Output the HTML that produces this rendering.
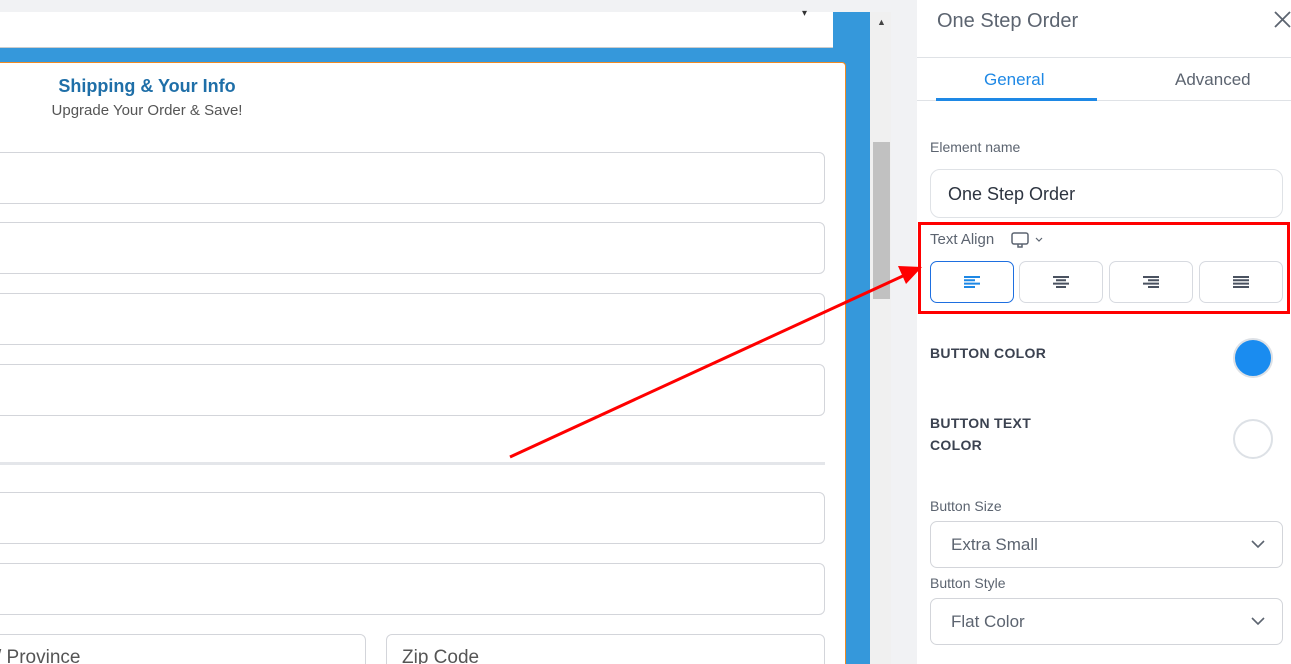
<!DOCTYPE html>
<html style="width:1291px;height:664px;overflow:hidden"><head><style>
body{margin:0;width:1291px;height:664px;overflow:hidden;position:relative;background:#f1f2f4;font-family:"Liberation Sans",sans-serif}
.a{position:absolute;box-sizing:border-box}
.inp{position:absolute;box-sizing:border-box;border:1px solid #d3d5da;border-radius:6px;background:#fff}
.btn{position:absolute;box-sizing:border-box;border:1px solid #d7dae0;border-radius:7px;background:#fff;top:261px;height:42px;width:84px;display:flex;align-items:center;justify-content:center}
.lbl{position:absolute;color:#5c6470;font-size:14px}
.bold{position:absolute;color:#3b4250;font-size:14px;font-weight:bold;letter-spacing:.3px;line-height:22px}
</style></head><body>
<div class="a" style="left:0;top:12px;width:870px;height:652px;background:#3598db"></div>
<div class="a" style="left:0;top:12px;width:833px;height:36px;background:#fff;border-bottom:1px solid #ccc"></div>
<div class="a" style="left:802px;top:8px;font-size:10px;color:#333">▾</div>
<div class="a" style="left:0;top:62px;width:846px;height:602px;background:#fff;border:1px solid #f08a24;border-left:none;border-bottom:none;border-radius:0 4px 0 0"></div>
<div class="a" style="left:0;top:76px;width:294px;text-align:center;color:#1f6fa8;font-weight:bold;font-size:18px">Shipping &amp; Your Info</div>
<div class="a" style="left:0;top:102px;width:294px;text-align:center;color:#555;font-size:15px">Upgrade Your Order &amp; Save!</div>
<div class="inp" style="left:-8px;top:152px;width:833px;height:52px"></div>
<div class="inp" style="left:-8px;top:222px;width:833px;height:52px"></div>
<div class="inp" style="left:-8px;top:293px;width:833px;height:52px"></div>
<div class="inp" style="left:-8px;top:364px;width:833px;height:52px"></div>
<div class="a" style="left:0;top:462px;width:825px;height:3px;background:#e4e6ea"></div>
<div class="inp" style="left:-8px;top:492px;width:833px;height:52px"></div>
<div class="inp" style="left:-8px;top:563px;width:833px;height:52px"></div>
<div class="inp" style="left:-8px;top:634px;width:374px;height:52px"></div>
<div class="inp" style="left:386px;top:634px;width:439px;height:52px"></div>
<div class="a" style="left:-4px;top:647px;font-size:19px;color:#555">/ Province</div>
<div class="a" style="left:402px;top:647px;font-size:19px;color:#555">Zip Code</div>
<div class="a" style="left:870px;top:12px;width:21px;height:652px;background:#f0f0f0"></div>
<div class="a" style="left:877px;top:17px;font-size:9px;color:#444">▲</div>
<div class="a" style="left:873px;top:142px;width:17px;height:157px;background:#c1c1c1"></div>
<div class="a" style="left:917px;top:0;width:374px;height:664px;background:#fff"></div>
<div class="a" style="left:937px;top:10px;font-size:20px;color:#5c6470">One Step Order</div>
<svg class="a" style="left:1274px;top:11px" width="17" height="17"><path d="M1 1l15 15M16 1L1 16" stroke="#5c6470" stroke-width="1.8"/></svg>
<div class="a" style="left:917px;top:57px;width:374px;height:1px;background:#dfe2e6"></div>
<div class="a" style="left:917px;top:100px;width:374px;height:1px;background:#dfe2e6"></div>
<div class="a" style="left:936px;top:98px;width:161px;height:3px;background:#1e88e5"></div>
<div class="a" style="left:984px;top:70px;font-size:17px;color:#1e88e5">General</div>
<div class="a" style="left:1175px;top:70px;font-size:17px;color:#5c6470">Advanced</div>
<div class="lbl" style="left:930px;top:139px">Element name</div>
<div class="inp" style="left:930px;top:169px;width:353px;height:49px;border-radius:10px;border-color:#dfe2e6"></div>
<div class="a" style="left:948px;top:184px;font-size:18px;color:#2d3440">One Step Order</div>
<div class="a" style="left:918px;top:222px;width:372px;height:92px;border:3px solid #f00"></div>
<div class="lbl" style="left:930px;top:231px;font-size:15px">Text Align</div>
<svg class="a" style="left:1011px;top:231px" width="36" height="18"><rect x="1" y="2" width="16" height="11" rx="2" fill="none" stroke="#5c6470" stroke-width="1.5"/><path d="M7 13v3h4v-3" fill="none" stroke="#5c6470" stroke-width="1.5"/><path d="M25 7l3 3 3-3" fill="none" stroke="#5c6470" stroke-width="1.2"/></svg>
<div class="btn" style="left:930px;border-color:#1e6fe0"><svg width="18" height="12"><path d="M1 1h16M1 4.3h11M1 7.6h16M1 11h11" stroke="#1e88e5" stroke-width="2"/></svg></div>
<div class="btn" style="left:1019px"><svg width="18" height="12"><path d="M1 1h16M4 4.3h10M1 7.6h16M4 11h10" stroke="#4a5260" stroke-width="2"/></svg></div>
<div class="btn" style="left:1109px"><svg width="18" height="12"><path d="M1 1h16M6 4.3h11M1 7.6h16M6 11h11" stroke="#4a5260" stroke-width="2"/></svg></div>
<div class="btn" style="left:1199px"><svg width="18" height="12"><path d="M1 1h16M1 4.3h16M1 7.6h16M1 11h16" stroke="#4a5260" stroke-width="2"/></svg></div>
<div class="bold" style="left:930px;top:342px">BUTTON COLOR</div>
<div class="a" style="left:1233px;top:338px;width:40px;height:40px;border-radius:50%;background:#1a8cf0;border:2px solid #dde1e6"></div>
<div class="bold" style="left:930px;top:412px">BUTTON TEXT<br>COLOR</div>
<div class="a" style="left:1233px;top:419px;width:40px;height:40px;border-radius:50%;background:#fff;border:2px solid #dde1e6"></div>
<div class="lbl" style="left:930px;top:498px">Button Size</div>
<div class="inp" style="left:930px;top:521px;width:353px;height:47px;border-radius:7px"></div>
<div class="a" style="left:951px;top:535px;font-size:17px;color:#5c6470">Extra Small</div>
<div class="lbl" style="left:930px;top:575px">Button Style</div>
<div class="inp" style="left:930px;top:598px;width:353px;height:47px;border-radius:7px"></div>
<div class="a" style="left:951px;top:612px;font-size:17px;color:#5c6470">Flat Color</div>
<svg class="a" style="left:1250px;top:538px" width="16" height="12"><path d="M2 3l6 6 6-6" fill="none" stroke="#5c6470" stroke-width="1.6"/></svg>
<svg class="a" style="left:1250px;top:615px" width="16" height="12"><path d="M2 3l6 6 6-6" fill="none" stroke="#5c6470" stroke-width="1.6"/></svg>
<svg class="a" style="left:0;top:0" width="1291" height="664"><line x1="510" y1="457" x2="905" y2="275" stroke="#f00" stroke-width="3"/><path d="M922 267L898 266 906 284Z" fill="#f00"/></svg>
</body></html>
